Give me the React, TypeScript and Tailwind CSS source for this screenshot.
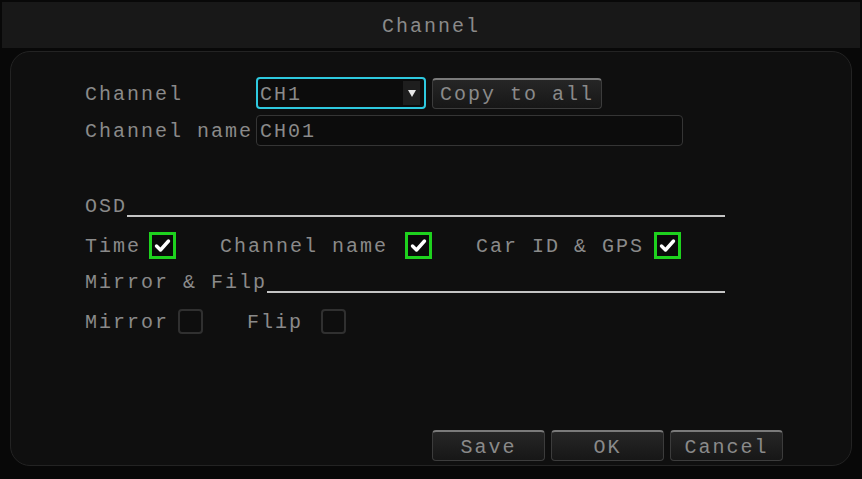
import React from "react";

const font = "font-['Liberation_Mono',monospace] text-[20px] tracking-[2px] text-[#8a8a8a] leading-none pt-[3px]";

const Check = ({ on, size = 27 }: { on: boolean; size?: number }) =>
  on ? (
    <span
      className="flex items-center justify-center border-[3px] border-[#1ed21e] bg-[#0a0a0a]"
      style={{ width: size, height: size }}
    >
      <svg width="17" height="15" viewBox="0 0 17 15">
        <path d="M2.5 8 L6.5 12 L14.5 3" fill="none" stroke="#ffffff" strokeWidth="3.4" strokeLinecap="round" strokeLinejoin="round" />
      </svg>
    </span>
  ) : (
    <span
      className="block rounded-[4px] border-2 border-[#303030] bg-[#0e0e0e]"
      style={{ width: size, height: size }}
    />
  );

const Button = ({ label, w }: { label: string; w: string }) => (
  <div
    className={`${w} h-[31px] flex items-center justify-center rounded-[4px] border border-[#3c3c3c] border-t-2 border-t-[#7a7a7a] bg-gradient-to-b from-[#262626] to-[#171717] ${font}`}
  >
    {label}
  </div>
);

export default function App() {
  return (
    <div className="w-[862px] h-[479px] bg-[#080808] overflow-hidden">
      {/* Title bar */}
      <div className="h-[48px] mx-[2px] pt-[2px]">
        <div className={`h-full bg-[#181818] flex items-center justify-center ${font} text-[#7c7c7c]`}>
          Channel
        </div>
      </div>

      {/* Panel */}
      <div className="ml-[10px] mr-[10px] mt-[3px] h-[415px] rounded-[20px] border border-[#232323] bg-[#0f0f0f] pl-[74px] pt-[25px] relative">
        {/* Channel row */}
        <div className="flex items-center h-[32px]">
          <span className={`w-[171px] ${font}`}>Channel</span>
          <div className="w-[170px] h-[32px] rounded-[4px] border-2 border-[#2ec9df] bg-[#0c0c0c] flex items-center justify-between pl-[2px] pr-[4px]">
            <span className={font}>CH1</span>
            <span className="w-[17px] h-[24px] bg-[#1e1e1e] flex items-center justify-center">
              <svg width="8" height="7" viewBox="0 0 8 7">
                <path d="M0 0 H8 L4 7 Z" fill="#e8e8e8" />
              </svg>
            </span>
          </div>
          <div className="ml-[6px]">
            <Button label="Copy to all" w="w-[170px]" />
          </div>
        </div>

        {/* Channel name row */}
        <div className="flex items-center h-[31px] mt-[6px]">
          <span className={`w-[171px] ${font}`}>Channel name</span>
          <div className="w-[427px] h-[31px] rounded-[4px] border-[1.5px] border-[#353535] bg-[#0c0c0c] flex items-center pl-[3px]">
            <span className={font}>CH01</span>
          </div>
        </div>

        {/* OSD */}
        <div className="flex items-end h-[22px] mt-[49px] w-[640px]">
          <span className={font}>OSD</span>
          <span className="flex-1 h-[2px] bg-[#c4c4c4]" />
        </div>

        <div className="flex items-center h-[27px] mt-[15px]">
          <span className={`w-[64px] ${font}`}>Time</span>
          <Check on />
          <span className={`ml-[44px] w-[185px] ${font}`}>Channel name</span>
          <Check on />
          <span className={`ml-[44px] w-[178px] ${font}`}>Car ID &amp; GPS</span>
          <Check on />
        </div>

        {/* Mirror & Filp */}
        <div className="flex items-end h-[22px] mt-[12px] w-[640px]">
          <span className={font}>Mirror &amp; Filp</span>
          <span className="flex-1 h-[2px] bg-[#c4c4c4]" />
        </div>

        <div className="flex items-center h-[25px] mt-[16px]">
          <span className={`w-[93px] ${font}`}>Mirror</span>
          <Check on={false} size={25} />
          <span className={`ml-[44px] w-[74px] ${font}`}>Flip</span>
          <Check on={false} size={25} />
        </div>

        {/* Buttons */}
        <div className="flex gap-[6px] ml-[347px] mt-[96px]">
          <Button label="Save" w="w-[113px]" />
          <Button label="OK" w="w-[113px]" />
          <Button label="Cancel" w="w-[113px]" />
        </div>
      </div>
    </div>
  );
}
